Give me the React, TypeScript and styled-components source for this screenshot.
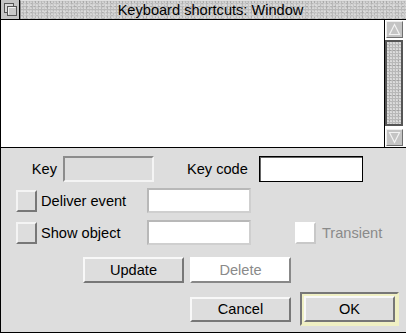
import React from "react";
import styled, { createGlobalStyle } from "styled-components";

const Global = createGlobalStyle`
  html, body { margin: 0; padding: 0; background: #dddddd; }
  body { font-family: "Liberation Sans", Arial, sans-serif; }
  * { box-sizing: border-box; }
`;

const FONT = `"Liberation Sans", Arial, sans-serif`;

const Window = styled.div`
  width: 406px;
  height: 333px;
  display: flex;
  flex-direction: column;
  border-left: 1px solid #000;
  border-bottom: 1px solid #000;
  overflow: hidden;
  font-family: ${FONT};
  font-size: 14.6px;
  color: #000;
`;

const TitleRow = styled.div`
  display: flex;
  height: 20px;
  border-bottom: 1px solid #000;
  flex: none;
`;

const BackIcon = styled.div`
  width: 19px;
  height: 19px;
  border-right: 1px solid #000;
  background: #c4c4c4;
  display: flex;
  align-items: center;
  justify-content: center;
  flex: none;
`;

const TitleBar = styled.div`
  flex: 1;
  display: flex;
  align-items: center;
  justify-content: center;
  padding-right: 6px;
  border-top: 1px solid #e0e0e0;
  border-left: 1px solid #888;
  background-color: #b9b9b9;
  background-image:
    radial-gradient(ellipse at 30% 40%, rgba(225,225,225,0.75) 0 0.8px, transparent 1.3px),
    radial-gradient(ellipse at 70% 70%, rgba(215,215,215,0.6) 0 1px, transparent 1.6px),
    radial-gradient(ellipse at 50% 20%, rgba(150,150,150,0.4) 0 0.7px, transparent 1.1px),
    radial-gradient(ellipse at 20% 80%, rgba(220,220,220,0.55) 0 1.2px, transparent 2px),
    radial-gradient(ellipse at 60% 50%, rgba(205,205,205,0.5) 0 2px, transparent 4px);
  background-size: 3px 3px, 5px 4px, 4px 5px, 7px 6px, 13px 9px;
  font-size: 14.6px;
  line-height: 1;
  white-space: nowrap;
`;

const WorkRow = styled.div`
  display: flex;
  height: 127px;
  flex: none;
`;

const WorkArea = styled.div`
  flex: 1;
  background: #fff;
`;

const ScrollBar = styled.div`
  width: 22px;
  flex: none;
  border-left: 1px solid #000;
  background: #fff;
  display: flex;
  flex-direction: column;
  padding: 1px 0 1px 1px;
`;

const ArrowBox = styled.div`
  width: 17px;
  height: 17px;
  background: #c4c4c4;
  border-style: solid;
  border-width: 1px;
  border-color: #eeeeee #707070 #707070 #eeeeee;
  display: flex;
  align-items: center;
  justify-content: center;
  flex: none;
`;

const Track = styled.div`
  flex: 1;
  padding: 2px 0;
  display: flex;
`;

const Slider = styled.div`
  width: 18px;
  margin-left: -1px;
  height: 86px;
  border: 2px solid #555;
  background-color: #b8b8b8;
  background-image:
    radial-gradient(circle at 30% 40%, rgba(235,235,235,0.7) 0 0.8px, transparent 1.2px),
    radial-gradient(circle at 70% 70%, rgba(140,140,140,0.5) 0 0.7px, transparent 1px);
  background-size: 3px 3px, 4px 5px;
`;

const Pane = styled.div`
  flex: 1;
  border-top: 1px solid #000;
  background: #dddddd;
  display: flex;
  flex-direction: column;
  padding-top: 8px;
`;

const Row = styled.div<{ $top?: number; $h: number }>`
  display: flex;
  align-items: center;
  height: ${(p) => p.$h}px;
  margin-top: ${(p) => p.$top ?? 0}px;
  flex: none;
`;

const Label = styled.div<{ $w: number; $ml?: number; $right?: boolean; $dim?: boolean }>`
  width: ${(p) => p.$w}px;
  margin-left: ${(p) => p.$ml ?? 0}px;
  text-align: ${(p) => (p.$right ? "right" : "left")};
  color: ${(p) => (p.$dim ? "#8a8a8a" : "#000")};
  white-space: nowrap;
  flex: none;
`;

const Field = styled.div<{ $w: number; $ml?: number; $kind: "grey" | "white" | "active" }>`
  width: ${(p) => p.$w}px;
  height: 100%;
  margin-left: ${(p) => p.$ml ?? 0}px;
  flex: none;
  border-style: solid;
  border-width: ${(p) => (p.$kind === "active" ? "1px" : "2px")};
  ${(p) =>
    p.$kind === "grey"
      ? `background: #dddddd; border-color: #8c8c8c #f4f4f4 #f4f4f4 #8c8c8c;`
      : p.$kind === "white"
      ? `background: #fff; border-color: #b8b8b8 #cfcfcf #cfcfcf #b8b8b8;`
      : `background: #fff; border-color: #000; box-shadow: inset 1px 1px 0 0 #666;`}
`;

const Check = styled.div<{ $ml: number; $disabled?: boolean }>`
  width: 21px;
  height: 22px;
  margin-left: ${(p) => p.$ml}px;
  flex: none;
  border-style: solid;
  border-width: 2px;
  ${(p) =>
    p.$disabled
      ? `background: #fff; border-color: #fff #c8c8c8 #c8c8c8 #fff;`
      : `background: #dddddd; border-color: #f4f4f4 #777 #777 #f4f4f4;`}
`;

const Button = styled.div<{ $w: number; $h: number; $ml?: number; $disabled?: boolean }>`
  width: ${(p) => p.$w}px;
  height: ${(p) => p.$h}px;
  margin-left: ${(p) => p.$ml ?? 0}px;
  flex: none;
  display: flex;
  align-items: center;
  justify-content: center;
  border-style: solid;
  border-width: 2px;
  ${(p) =>
    p.$disabled
      ? `background: #fff; color: #8a8a8a; border-color: #fff #888 #888 #fff;`
      : `background: #dddddd; color: #000; border-color: #f8f8f8 #777 #777 #f8f8f8;`}
`;

const DefaultFrame = styled.div<{ $ml: number }>`
  width: 99px;
  height: 34px;
  margin-left: ${(p) => p.$ml}px;
  flex: none;
  display: flex;
  border-style: solid;
  border-width: 2px;
  border-color: #777 #f0f0c4 #f0f0c4 #777;
  background: #f0f0c4;
  padding: 2px;
`;

const BackGlyph = () => (
  <svg width="15" height="15" viewBox="0 0 15 15">
    <rect x="1.5" y="1.5" width="9" height="9" fill="#d8d8d8" stroke="#555" />
    <rect x="4.5" y="4.5" width="9" height="9" fill="#c8c8c8" stroke="#555" />
    <path d="M5.5 12.5 V5.5 H12.5" fill="none" stroke="#f0f0f0" />
  </svg>
);

const Arrow = ({ up }: { up: boolean }) => (
  <svg width="13" height="13" viewBox="0 0 13 13">
    {up ? (
      <path d="M6.5 1.5 L11.5 11.5 H1.5 Z" fill="none" stroke="#f2f2f2" strokeWidth="1.2" />
    ) : (
      <path d="M1.5 1.5 H11.5 L6.5 11.5 Z" fill="none" stroke="#f2f2f2" strokeWidth="1.2" />
    )}
  </svg>
);

export default function App() {
  return (
    <>
      <Global />
      <Window>
        <TitleRow>
          <BackIcon>
            <BackGlyph />
          </BackIcon>
          <TitleBar>Keyboard shortcuts: Window</TitleBar>
        </TitleRow>
        <WorkRow>
          <WorkArea />
          <ScrollBar>
            <ArrowBox>
              <Arrow up />
            </ArrowBox>
            <Track>
              <Slider />
            </Track>
            <ArrowBox>
              <Arrow up={false} />
            </ArrowBox>
          </ScrollBar>
        </WorkRow>
        <Pane>
          <Row $h={26}>
            <Label $w={56} $right>Key</Label>
            <Field $w={91} $ml={6} $kind="grey" />
            <Label $w={61} $ml={33}>Key code</Label>
            <Field $w={104} $ml={11} $kind="active" />
          </Row>
          <Row $h={25} $top={6}>
            <Check $ml={15} />
            <Label $w={106} $ml={4}>Deliver event</Label>
            <Field $w={104} $kind="white" />
          </Row>
          <Row $h={25} $top={7}>
            <Check $ml={15} />
            <Label $w={106} $ml={4}>Show object</Label>
            <Field $w={104} $kind="white" />
            <Check $ml={44} $disabled />
            <Label $w={70} $ml={6} $dim>Transient</Label>
          </Row>
          <Row $h={26} $top={12}>
            <Button $w={101} $h={26} $ml={82}>Update</Button>
            <Button $w={101} $h={26} $ml={6} $disabled>Delete</Button>
          </Row>
          <Row $h={34} $top={9}>
            <Button $w={101} $h={25} $ml={189}>Cancel</Button>
            <DefaultFrame $ml={9}>
              <Button $w={91} $h={26}>OK</Button>
            </DefaultFrame>
          </Row>
        </Pane>
      </Window>
    </>
  );
}
